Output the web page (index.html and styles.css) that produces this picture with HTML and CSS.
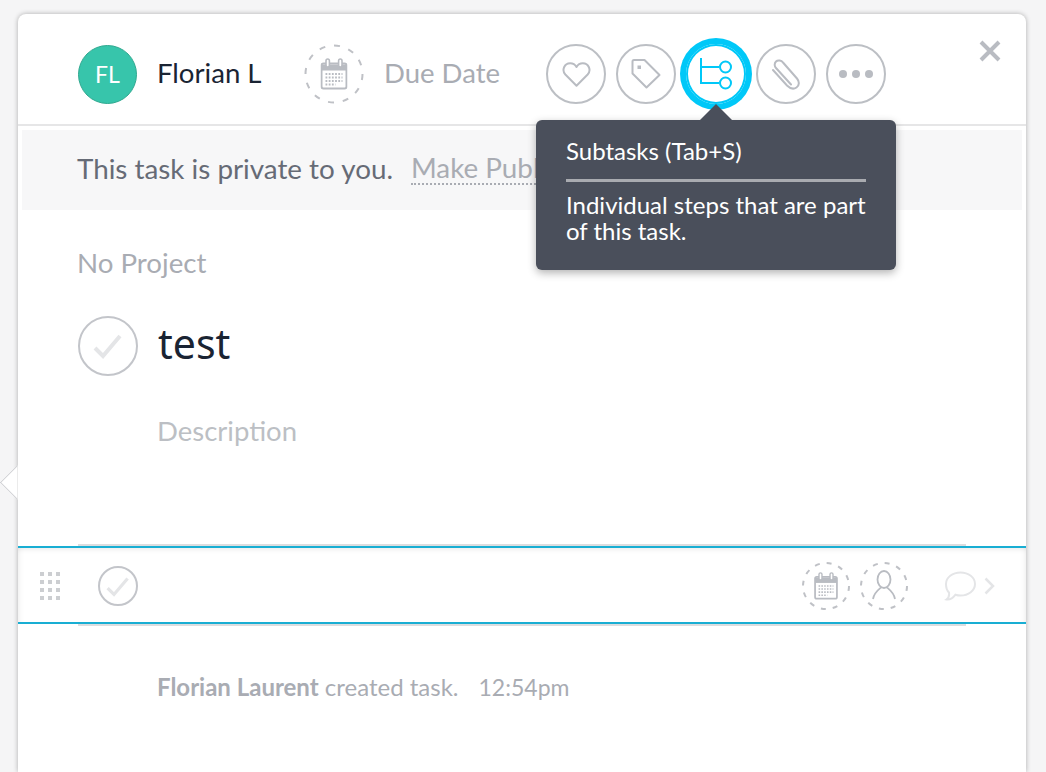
FILE: index.html
```html
<!DOCTYPE html>
<html lang="en">
<head>
  <meta charset="UTF-8" />
  <title>Task</title>
  <link rel="stylesheet" href="styles.css">
</head>
<body>

  <svg class="defs" width="0" height="0">
    <symbol id="calendar" viewBox="0 0 27 32">
      <path d="M1 6.500h25v6H1z" fill="#b9bcc2"/>
      <rect x="1" y="5.500" width="25" height="25" rx="2" fill="none" stroke="#b9bcc2" stroke-width="2"/>
      <rect x="5.500" y="1" width="3.400" height="8" rx="1.700" fill="#fff" stroke="#b9bcc2" stroke-width="1.600"/>
      <rect x="18.100" y="1" width="3.400" height="8" rx="1.700" fill="#fff" stroke="#b9bcc2" stroke-width="1.600"/>
      <path d="M5 16h17M5 19.500h17M5 23h17M5 26.500h10" stroke="#b9bcc2" stroke-width="1.800" stroke-dasharray="1.800 1.400" fill="none"/>
    </symbol>
    <symbol id="check" viewBox="0 0 30 26">
      <path d="M2 15l8 8L27 3" fill="none" stroke="#e4e5e7" stroke-width="4"/>
    </symbol>
  </svg>

  <div class="card">
    <header class="head">
      <div class="avatar">FL</div>
      <span class="assignee">Florian L</span>
      <svg class="due-circle" width="60" height="60" viewBox="0 0 60 60">
        <circle cx="30" cy="30" r="28.500" class="dash-ring" stroke-dasharray="6 8.900"/>
        <use href="#calendar" x="16.500" y="14" width="27" height="32"/>
      </svg>
      <span class="due-label">Due Date</span>

      <div class="actions">
        <div class="circle">
          <svg width="29" height="27" viewBox="0 0 32 30"><path d="M16 27.500L3.600 15C-.8 10.200 2.500 2.500 9 2.500c3 0 5.500 1.500 7 4.200 1.500-2.700 4-4.200 7-4.200 6.500 0 9.800 7.700 5.400 12.500z" fill="none" stroke="#b9bcc2" stroke-width="2.200" stroke-linejoin="round"/></svg>
        </div>
        <div class="circle">
          <svg width="30" height="30" viewBox="0 0 30 30"><path d="M1.500 2.500Q1.500 1 3 1h10.500L28.500 16 15.500 28.500 1.500 14.500z" fill="none" stroke="#b9bcc2" stroke-width="2" stroke-linejoin="round"/><rect x="6.500" y="6.500" width="3.500" height="3.500" fill="#b9bcc2"/></svg>
        </div>
        <div class="circle active">
          <svg width="32" height="32" viewBox="0 0 32 32"><path d="M1 0v25h18M1 9h18" fill="none" stroke="#00c8f8" stroke-width="2"/><circle cx="25.500" cy="9" r="5.500" fill="#fff" stroke="#00c8f8" stroke-width="2"/><circle cx="25.500" cy="25" r="5.500" fill="#fff" stroke="#00c8f8" stroke-width="2"/></svg>
        </div>
        <div class="circle">
          <svg width="28" height="31" viewBox="0 0 28 31"><path d="M1 11l14 15.500c3 3 6.500 4 9.500 2s3-6 .5-9L11 3.500C9.500 1.500 6 .5 4 2.500s-1.500 5 0 6.500l15 16.500" fill="none" stroke="#b9bcc2" stroke-width="2" stroke-linecap="round"/></svg>
        </div>
        <div class="circle">
          <svg width="36" height="10" viewBox="0 0 36 10"><circle cx="5" cy="5" r="4" fill="#b9bcc2"/><circle cx="18" cy="5" r="4" fill="#b9bcc2"/><circle cx="31" cy="5" r="4" fill="#b9bcc2"/></svg>
        </div>
      </div>

      <svg class="close" width="22" height="22" viewBox="0 0 22 22"><path d="M2 2l18 18M20 2L2 20" stroke="#b9bcc2" stroke-width="4"/></svg>
    </header>

    <div class="tooltip">
      <div class="tooltip-title">Subtasks (Tab+S)</div>
      <div class="tooltip-body">Individual steps that are part of this task.</div>
    </div>

    <div class="private-bar">
      <span>This task is private to you.</span>
      <a class="make-public">Make Public</a>
    </div>

    <div class="details">
      <div class="project">No Project</div>
      <div class="title-row">
        <div class="check-big">
          <svg width="30" height="26"><use href="#check"/></svg>
        </div>
        <h1 class="task-name">test</h1>
      </div>
      <div class="description">Description</div>
    </div>

    <div class="subtask-wrap">
      <div class="subtask-row">
        <div class="grip">
          <i></i><i></i><i></i><i></i><i></i><i></i><i></i><i></i><i></i><i></i><i></i><i></i>
        </div>
        <div class="check-small">
          <svg width="24" height="21"><use href="#check"/></svg>
        </div>
        <div class="row-right">
          <svg width="48" height="48" viewBox="0 0 48 48">
            <circle cx="24" cy="24" r="23" class="dash-ring" stroke-dasharray="5 7.040"/>
            <use href="#calendar" x="12" y="10" width="24" height="28"/>
          </svg>
          <svg width="48" height="48" viewBox="0 0 48 48">
            <circle cx="24" cy="24" r="23" class="dash-ring" stroke-dasharray="5 7.040"/>
            <ellipse cx="24" cy="17.500" rx="6.500" ry="8.500" fill="none" stroke="#b9bcc2" stroke-width="1.800"/>
            <path d="M13 37c1-6 5-9 8-11.500M35 37c-1-6-5-9-8-11.500" fill="none" stroke="#b9bcc2" stroke-width="1.800"/>
          </svg>
          <svg class="bubble" width="32" height="30" viewBox="0 0 32 30"><path d="M16.500 1.500C24.500 1.500 31 6.500 31 13s-6.500 11.500-14.500 11.500c-2 0-3.500-.3-5-.8C9 27 5.500 29 2.500 28.500 4.500 27 5.500 24.500 5 21.500 2.800 19.500 2 16.500 2 13 2 6.500 8.500 1.500 16.500 1.500z" fill="none" stroke="#e4e5e7" stroke-width="2"/></svg>
          <svg class="chevron" width="11" height="18" viewBox="0 0 11 18"><path d="M1.500 1.500L9 9l-7.500 7.500" fill="none" stroke="#e4e5e7" stroke-width="2.500"/></svg>
        </div>
      </div>
    </div>

    <div class="activity">
      <b>Florian Laurent</b> created task.<span class="time">12:54pm</span>
    </div>
  </div>

  <div class="pointer"></div>

</body>
</html>
```

FILE: styles.css
```css
* {
  box-sizing: border-box;
}

html, body {
  height: 772px;
  overflow: hidden;
}

body {
  margin: 0;
  background: #f5f5f6;
  font-family: 'Lato', 'Open Sans', sans-serif;
  color: #a9acb3;
}

.defs {
  position: absolute;
}

.card {
  position: relative;
  width: 1008px;
  height: 758px;
  margin: 14px 0 0 18px;
  background: #fff;
  border-radius: 8px 8px 0 0;
  box-shadow: 0 0 5px rgba(0, 0, 0, 0.3);
}

.head {
  display: flex;
  align-items: center;
  height: 112px;
  padding: 10px 0 0 60px;
  border-bottom: 2px solid #e6e6e7;
}

.avatar {
  display: flex;
  justify-content: center;
  align-items: center;
  width: 59px;
  height: 59px;
  border: 1px solid #2fa88f;
  border-radius: 50%;
  background: #37c5ab;
  color: #fff;
  font-size: 23px;
}

.assignee {
  margin-left: 20px;
  padding-bottom: 4px;
  width: 147px;
  font-size: 27.600px;
  color: #1a2433;
}

.dash-ring {
  fill: none;
  stroke: #bfc1c6;
  stroke-width: 2;
}

.due-label {
  margin-left: 20px;
  padding-bottom: 4px;
  width: 162px;
  font-size: 27.500px;
  color: #a9acb3;
}

.actions {
  display: flex;
  gap: 10px;
}

.circle {
  display: flex;
  justify-content: center;
  align-items: center;
  width: 60px;
  height: 60px;
  border: 2px solid #bcbfc4;
  border-radius: 50%;
  background: #fff;
}

.circle.active {
  border: none;
  box-shadow: inset 0 0 0 2px #00c8f8, 0 0 0 6px #00c8f8;
}

.close {
  position: absolute;
  top: 26px;
  left: 961px;
}

.tooltip {
  position: absolute;
  top: 106px;
  left: 518px;
  width: 360px;
  height: 150px;
  padding: 18px 30px;
  border-radius: 6px;
  background: #4a4f5b;
  box-shadow: 0 3px 8px rgba(0, 0, 0, 0.3);
  color: #fff;
  font-size: 24px;
  line-height: 26px;
  z-index: 5;
}

.tooltip::before {
  content: '';
  position: absolute;
  top: -16px;
  left: 164px;
  border-left: 16px solid transparent;
  border-right: 16px solid transparent;
  border-bottom: 16px solid #4a4f5b;
}

.tooltip-title {
  padding-bottom: 15px;
  border-bottom: 3px solid #a9abb0;
}

.tooltip-body {
  margin-top: 10px;
}

.private-bar {
  display: flex;
  gap: 18px;
  align-items: center;
  height: 80px;
  margin: 4px 4px 0;
  padding: 0 0 3px 55px;
  background: #f7f7f8;
  font-size: 27.800px;
  color: #666b76;
}

.make-public {
  color: #a9acb3;
  border-bottom: 2px dotted #a9acb3;
  line-height: 30px;
}

.details {
  height: 334px;
  padding: 36px 0 0 60px;
}

.project {
  height: 34px;
  margin-left: -1px;
  font-size: 27.700px;
  line-height: 34px;
  color: #a9acb3;
}

.title-row {
  display: flex;
  align-items: center;
  gap: 20px;
  margin-top: 36px;
}

.check-big {
  display: flex;
  justify-content: center;
  align-items: center;
  width: 60px;
  height: 60px;
  border: 2px solid #c3c5ca;
  border-radius: 50%;
}

.task-name {
  margin: 0;
  padding-bottom: 6px;
  font-family: 'Noto Sans', sans-serif;
  font-size: 41px;
  font-weight: 400;
  line-height: 54px;
  color: #1a2433;
}

.description {
  margin: 38px 0 0 79px;
  font-size: 27.500px;
  line-height: 34px;
  color: #bcbfc4;
}

.subtask-wrap {
  height: 82px;
  padding: 2px 0;
  background: linear-gradient(#dcdddf, #dcdddf) 60px 0 / 888px 2px no-repeat,
              linear-gradient(#dcdddf, #dcdddf) 60px 100% / 888px 2px no-repeat;
}

.subtask-row {
  display: flex;
  align-items: center;
  height: 78px;
  padding: 2px 31px 0 22px;
  border-top: 2px solid #19aed3;
  border-bottom: 2px solid #19aed3;
  box-shadow: inset 0 6px 6px -6px rgba(0, 0, 0, 0.12), inset 6px 0 6px -6px rgba(0, 0, 0, 0.1), inset -6px 0 6px -6px rgba(0, 0, 0, 0.1);
}

.grip {
  display: grid;
  grid-template-columns: repeat(3, 4px);
  gap: 4px;
}

.grip i {
  width: 4px;
  height: 4px;
  background: #ccced1;
}

.check-small {
  display: flex;
  justify-content: center;
  align-items: center;
  width: 40px;
  height: 40px;
  margin-left: 38px;
  border: 2px solid #c3c5ca;
  border-radius: 50%;
}

.row-right {
  display: flex;
  align-items: center;
  margin-left: auto;
  gap: 10px;
}

.bubble {
  margin-left: 26px;
}

.chevron {
  margin-left: -2px;
}

.activity {
  padding: 47px 0 0 139px;
  font-size: 24px;
  line-height: 28px;
  color: #a9acb3;
}

.time {
  margin-left: 20px;
  font-size: 23px;
}

.pointer {
  position: absolute;
  top: 470px;
  left: 5px;
  width: 25px;
  height: 25px;
  background: #fff;
  border-left: 1px solid #cfd0d3;
  border-bottom: 1px solid #cfd0d3;
  transform: rotate(45deg);
  clip-path: polygon(0 0, 100% 100%, 0 100%);
}
```
